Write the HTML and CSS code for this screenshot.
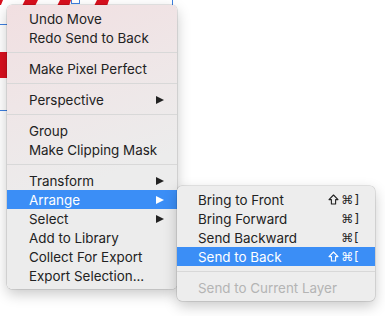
FILE: index.html
```html
<!DOCTYPE html>
<html lang="en">

<head>
    <meta charset="UTF-8">
    <title>Context Menu</title>
    <link rel="stylesheet" href="styles.css">
</head>

<body>
    <div class="canvas">
        <!-- artwork behind the menu -->
        <svg class="art" width="385" height="316" viewBox="0 0 385 316">
            <g fill="#d9101e">
                <polygon points="0,0 3,0 1,5 0,5" />
                <polygon points="25,0 38,0 35,6 22,6" />
                <polygon points="60,0 71,0 69,6 57,6" />
                <polygon points="97,0 109,0 107,6 94,6" />
                <rect x="0" y="52" width="8" height="26" />
            </g>
            <g stroke="#3d7fe0" stroke-width="1" fill="none">
                <line x1="0" y1="24.5" x2="8" y2="24.5" />
                <line x1="0" y1="110.5" x2="8" y2="110.5" />
                <line x1="172.5" y1="0" x2="172.5" y2="6" />
            </g>
            <rect x="71.5" y="-3.5" width="8" height="7" fill="#fff" stroke="#3d7fe0" />
        </svg>

        <!-- Menu principal -->
        <div class="menu main-menu">
            <div class="item">Undo Move</div>
            <div class="item">Redo Send to Back</div>
            <div class="sep"></div>
            <div class="item">Make Pixel Perfect</div>
            <div class="sep"></div>
            <div class="item sub">Perspective</div>
            <div class="sep"></div>
            <div class="item">Group</div>
            <div class="item">Make Clipping Mask</div>
            <div class="sep"></div>
            <div class="item sub">Transform</div>
            <div class="item sub active">Arrange</div>
            <div class="item sub">Select</div>
            <div class="item">Add to Library</div>
            <div class="item">Collect For Export</div>
            <div class="item">Export Selection...</div>
        </div>

        <!-- Submenu Arrange -->
        <div class="menu sub-menu">
            <div class="item">Bring to Front
                <span class="key"><svg class="shift" width="11" height="11" viewBox="0 0 11 11"><path d="M5.5 1 L10 5.6 H7.6 V10 H3.4 V5.6 H1 Z" /></svg>⌘]</span>
            </div>
            <div class="item">Bring Forward<span class="key">⌘]</span></div>
            <div class="item">Send Backward<span class="key">⌘[</span></div>
            <div class="item active">Send to Back
                <span class="key"><svg class="shift" width="11" height="11" viewBox="0 0 11 11"><path d="M5.5 1 L10 5.6 H7.6 V10 H3.4 V5.6 H1 Z" /></svg>⌘[</span>
            </div>
            <div class="sep"></div>
            <div class="item disabled">Send to Current Layer</div>
        </div>
    </div>
</body>

</html>
```

FILE: styles.css
```css
body {
    margin: 0;
    background-color: #fff;
    font-family: Inter, "Noto Sans", "DejaVu Sans", sans-serif;
    font-size: 13.4px;
    color: #222;
}

.canvas {
    position: relative;
    width: 385px;
    height: 316px;
    overflow: hidden;
}

.art {
    position: absolute;
    left: 0;
    top: 0;
}

.menu {
    position: absolute;
    padding: 4px 0;
    border-radius: 5px;
    background: #ededed;
    box-shadow: 0 0 0 0.5px rgba(0, 0, 0, 0.18), 0 5px 14px rgba(0, 0, 0, 0.22);
}

.main-menu {
    left: 7px;
    top: 5px;
    width: 170px;
    background: linear-gradient(160deg, #f1dfe1 0%, #efe6e7 30%, #ececec 60%);
}

.sub-menu {
    left: 177px;
    top: 186px;
    width: 198px;
}

.item {
    position: relative;
    display: flex;
    justify-content: space-between;
    align-items: center;
    height: 19px;
    padding: 0 15px 0 22px;
    white-space: nowrap;
}

.sub-menu .item {
    padding-left: 21px;
}

.item.active {
    background-color: #3b8ef6;
    color: #fff;
}

.item.disabled {
    color: #b4b4b4;
}

.item.sub::after {
    content: "";
    width: 0;
    height: 0;
    margin-right: -2px;
    border-left: 8px solid #222;
    border-top: 4.5px solid transparent;
    border-bottom: 4.5px solid transparent;
}

.item.sub.active::after {
    border-left-color: #fff;
}

.key {
    display: flex;
    align-items: center;
    font-family: "DejaVu Sans", sans-serif;
    font-size: 12px;
    letter-spacing: 1px;
}

.shift {
    margin-right: 2px;
    fill: none;
    stroke: currentColor;
    stroke-width: 1.1;
    stroke-linejoin: round;
}

.sep {
    height: 1px;
    margin: 5px 0 6px;
    background-color: #d8d8d8;
}
```
